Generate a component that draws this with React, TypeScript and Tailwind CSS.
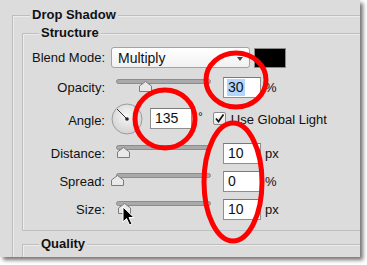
import React from "react";

const Thumb = ({ left }: { left: number }) => (
  <svg
    width="13"
    height="11"
    viewBox="0 0 13 11"
    className="absolute top-[1px]"
    style={{ left }}
  >
    <polygon
      points="6.5,0.5 12.5,5 12.5,10.5 0.5,10.5 0.5,5"
      fill="#e9e9e9"
      stroke="#7c7c7c"
      strokeWidth="1"
    />
  </svg>
);

const Track = ({ thumb }: { thumb: number }) => (
  <div className="relative w-[112px] self-stretch">
    <div className="relative ml-[5px] mt-[2px] w-[95px] h-[5px] rounded-full bg-[#a9a9a9] border border-[#8c8c8c]">
      <Thumb left={thumb} />
    </div>
  </div>
);

const Input = ({
  value,
  w = "w-[38px]",
  selected = false,
}: {
  value: string;
  w?: string;
  selected?: boolean;
}) => (
  <div
    className={`${w} h-[21px] bg-white border border-[#8e8e8e] border-t-[#7a7a7a] flex items-center pl-[3px] text-[14px] leading-[17px]`}
  >
    <span className={selected ? "bg-[#b4d5fe] px-[1px]" : "px-[1px]"}>{value}</span>
  </div>
);

const Label = ({ children }: { children: React.ReactNode }) => (
  <div className="w-[82px] text-right shrink-0">{children}</div>
);

const SliderRow = ({
  label,
  value,
  unit,
  thumb,
  selected,
  className = "",
}: {
  label: string;
  value: string;
  unit: string;
  thumb: number;
  selected?: boolean;
  className?: string;
}) => (
  <div className={`flex items-center h-[21px] ${className}`}>
    <Label>{label}</Label>
    <div className="w-[6px]" />
    <Track thumb={thumb} />
    <Input value={value} selected={selected} />
    <div className="ml-[4px]">{unit}</div>
  </div>
);

export default function App() {
  return (
    <div className="w-[367px] h-[265px] bg-white">
      <div className="relative w-[360px] h-[257px] bg-[#dcdcdc] overflow-hidden shadow-[3px_3px_4px_rgba(0,0,0,0.55)] font-['Liberation_Sans',Arial,sans-serif] text-[13px] leading-[16px] text-[#111]">
        {/* Drop Shadow group */}
        <div className="ml-[12px] mt-[15px] w-[420px] h-[300px] border-l border-t border-[#bebebe] shadow-[inset_1px_1px_0_#ececec]">
          <div className="-mt-[9px] ml-[17px] px-[2px] w-fit bg-[#dcdcdc] font-bold">
            Drop Shadow
          </div>

          {/* Structure group */}
          <div className="ml-[9px] mt-[10px] w-[400px] h-[198px] border-l border-t border-b border-[#bebebe] shadow-[inset_1px_1px_0_#ececec]">
            <div className="-mt-[9px] ml-[16px] px-[2px] w-fit bg-[#dcdcdc] font-bold">
              Structure
            </div>

            {/* Blend mode */}
            <div className="flex items-center h-[21px] mt-[6px]">
              <Label>Blend Mode:</Label>
              <div className="w-[6px]" />
              <div className="w-[139px] h-[21px] rounded-[3px] border border-[#a3a3a3] bg-gradient-to-b from-white to-[#f1f1f1] flex items-center pl-[6px] pr-[6px] justify-between text-[14px]">
                <span>Multiply</span>
                <svg width="6" height="4" viewBox="0 0 6 4" className="mt-[3px]">
                  <polygon points="0,0 6,0 3,4" fill="#444" />
                </svg>
              </div>
              <div className="ml-[4px] w-[32px] h-[20px] bg-black border border-[#8a8a8a]" />
            </div>

            <SliderRow
              className="mt-[9px]"
              label="Opacity:"
              value="30"
              unit="%"
              thumb={22}
              selected
            />

            {/* Angle */}
            <div className="flex items-center h-[31px] mt-[5px]">
              <Label>
                <span className="relative top-[2px]">Angle:</span>
              </Label>
              <div className="w-[6px]" />
              <svg width="32" height="32" viewBox="0 0 32 32">
                <defs>
                  <radialGradient id="dialg" cx="50%" cy="40%" r="60%">
                    <stop offset="0%" stopColor="#f7f7f7" />
                    <stop offset="100%" stopColor="#d2d2d2" />
                  </radialGradient>
                </defs>
                <circle cx="16" cy="16" r="15" fill="url(#dialg)" stroke="#9c9c9c" strokeWidth="1" />
                <line x1="16" y1="16" x2="6" y2="6" stroke="#333" strokeWidth="1" />
                <circle cx="16" cy="16" r="1.8" fill="#222" />
              </svg>
              <div className="w-[7px]" />
              <Input value="135" w="w-[42px]" />
              <div className="ml-[6px] -mt-[4px] text-[12px]">°</div>
              <div className="ml-[10px] w-[13px] h-[13px] rounded-[2px] border border-[#8a8a8a] bg-gradient-to-b from-white to-[#e6e6e6] flex items-center justify-center">
                <svg width="11" height="11" viewBox="0 0 11 11">
                  <path d="M2 5.5 L4.5 8.5 L9.5 1.5" fill="none" stroke="#111" strokeWidth="1.7" />
                </svg>
              </div>
              <div className="ml-[5px] relative top-[1px]">Use Global Light</div>
            </div>

            <SliderRow className="mt-[9px]" label="Distance:" value="10" unit="px" thumb={0} />
            <SliderRow className="mt-[7px]" label="Spread:" value="0" unit="%" thumb={-6} />
            <SliderRow className="mt-[7px]" label="Size:" value="10" unit="px" thumb={1} />
          </div>

          {/* Quality group */}
          <div className="ml-[9px] mt-[13px] w-[400px] h-[60px] border-l border-t border-[#bebebe] shadow-[inset_1px_1px_0_#ececec]">
            <div className="-mt-[9px] ml-[16px] px-[2px] w-fit bg-[#dcdcdc] font-bold">
              Quality
            </div>
          </div>
        </div>

        {/* Annotation overlay */}
        <svg
          className="absolute inset-0 pointer-events-none"
          width="360"
          height="257"
          viewBox="0 0 360 257"
        >
          <ellipse cx="236" cy="80" rx="30" ry="27" fill="none" stroke="#ff0000" strokeWidth="5" />
          <ellipse cx="165" cy="119" rx="30" ry="29" fill="none" stroke="#ff0000" strokeWidth="5" />
          <ellipse cx="233" cy="182" rx="29" ry="59" fill="none" stroke="#ff0000" strokeWidth="5" />
        </svg>

        {/* Mouse cursor */}
        <svg
          className="absolute left-[122px] top-[206px] pointer-events-none"
          width="14"
          height="21"
          viewBox="0 0 14 21"
        >
          <path
            d="M1 1 L1 16 L4.5 12.5 L7.5 19 L10 18 L7 11.5 L12 11.5 Z"
            fill="#000"
            stroke="#fff"
            strokeWidth="1"
            strokeLinejoin="round"
          />
        </svg>
      </div>
    </div>
  );
}
